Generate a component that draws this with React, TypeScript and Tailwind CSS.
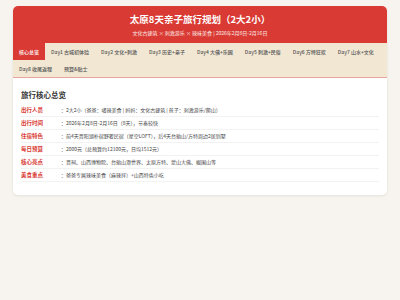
import React from "react";

const tabs = [
  "核心总览",
  "Day1 古城初体验",
  "Day2 文化+刺激",
  "Day3 历史+亲子",
  "Day4 大佛+乐园",
  "Day5 刺激+民俗",
  "Day6 方特狂欢",
  "Day7 山水+文化",
  "Day8 收尾返程",
  "预算&贴士",
];

const rows: [string, string][] = [
  ["出行人员", "：2大2小（爸爸：嗜辣美食 | 妈妈：文化古建筑 | 孩子：刺激游乐/爬山）"],
  ["出行时间", "：2026年2月8日-2月16日（8天），节奏较快"],
  ["住宿特色", "：前4天晋阳湖朴宿野奢民宿（星空LOFT），后4天台骀山/方特周边2居别墅"],
  ["每日预算", "：2000元（总预算约12100元，日均1512元）"],
  ["核心亮点", "：晋祠、山西博物院、台骀山滑世界、太原方特、蒙山大佛、崛围山等"],
  ["美食重点", "：爸爸专属辣味美食（麻辣拌）+山西特色小吃"],
];

export default function App() {
  return (
    <div
      className="min-h-[300px] w-[400px] bg-[#f7f4ef] px-[13px] pt-[6px]"
      style={{ fontFamily: '"Noto Sans CJK SC", "Noto Sans", sans-serif' }}
    >
      <div className="overflow-hidden rounded-[5px] bg-white shadow-[0_1px_3px_rgba(0,0,0,0.08)]">
        <div className="flex flex-col items-center bg-[#d93a33] pt-[7px] pb-[6px] text-white">
          <div className="h-[12px] text-[9.5px] font-bold leading-[12px]">
            太原8天亲子旅行规划（2大2小）
          </div>
          <div className="mt-[4px] h-[8px] text-[5px] leading-[8px] text-white/90">
            文化古建筑 × 刺激游乐 × 辣味美食 | 2026年2月8日-2月16日
          </div>
        </div>
        <div className="flex flex-wrap border-b border-[#eba39d] bg-[#f1e7d3]">
          {tabs.map((t, i) => (
            <div
              key={t}
              className={
                i === 0
                  ? "flex h-[17px] items-center bg-[#d93a33] px-[6px] text-[5px] font-medium text-white"
                  : "flex h-[17px] items-center px-[6px] text-[5px] font-medium text-[#555]"
              }
            >
              {t}
            </div>
          ))}
        </div>
        <div className="px-[8px] pt-[11px] pb-[13px]">
          <div className="mb-[4px] h-[11px] text-[7.5px] font-bold leading-[11px] text-[#333]">
            旅行核心总览
          </div>
          {rows.map(([k, v]) => (
            <div
              key={k}
              className="flex h-[13px] items-center border-b border-[#f2f2f2]"
            >
              <div className="w-[40px] shrink-0 text-[5.5px] font-bold text-[#d93a33]">
                {k}
              </div>
              <div className="text-[5px] text-[#444]">{v}</div>
            </div>
          ))}
        </div>
      </div>
    </div>
  );
}
